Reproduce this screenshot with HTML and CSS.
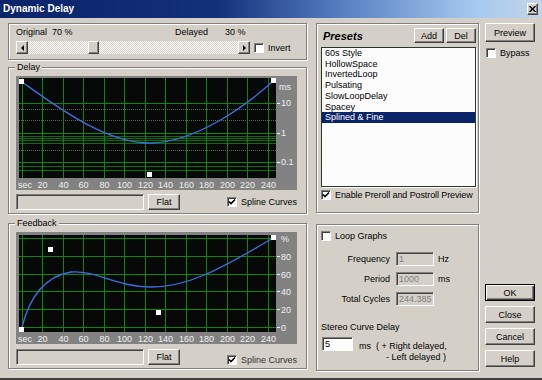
FILE: index.html
```html
<!DOCTYPE html>
<html lang="en">
<head>
    <meta charset="UTF-8">
    <title>Dynamic Delay</title>
    <link rel="stylesheet" href="styles.css">
</head>
<body>
<div class="window">
    <div class="titlebar">
        <span class="title">Dynamic Delay</span>
        <button class="title-close">
            <svg width="7" height="6" viewBox="0 0 7 6"><path d="M0.5 0 L6.5 6 M6.5 0 L0.5 6" stroke="#000" stroke-width="1.4"/></svg>
        </button>
    </div>

    <div class="client">
        <!-- Left column: mix slider and graphs -->
        <div class="col-left">
            <div class="group mix">
                <div class="mix-labels">
                    <span class="mix-name">Original</span><span class="mix-pct">70 %</span>
                    <span class="mix-name delayed">Delayed</span><span>30 %</span>
                </div>
                <div class="mix-row">
                    <div class="scroll">
                        <span class="scroll-btn"><svg width="3" height="6" viewBox="0 0 3 6"><path d="M3 0 L0 3 L3 6Z" fill="#000"/></svg></span>
                        <span class="scroll-track"><span class="scroll-thumb"></span></span>
                        <span class="scroll-btn"><svg width="3" height="6" viewBox="0 0 3 6"><path d="M0 0 L3 3 L0 6Z" fill="#000"/></svg></span>
                    </div>
                    <label class="checkbox invert"><span class="check"></span>Invert</label>
                </div>
            </div>

            <div class="group graph-group delay">
                <span class="legend">Delay</span>
                <svg class="graph" width="281" height="114" viewBox="0 0 281 114">
                    <rect width="281" height="114" fill="#828282"/>
                    <rect x="3" y="2" width="257" height="100" fill="#060907"/>
                    <path stroke="#0b6e0b" d="M3 60.5h257M3 62.5h257M3 64.5h257M3 67.5h257M3 90.5h257M3 94.5h257"/>
                    <path stroke="#4f6a4f" stroke-dasharray="1 1" d="M3 33.5h257M3 44.5h257M3 74.5h257"/>
                    <path stroke="#0d860d" d="M6.5 2v100M26.5 2v100M47.5 2v100M67.5 2v100M88.5 2v100M108.5 2v100M129.5 2v100M149.5 2v100M170.5 2v100M190.5 2v100M211.5 2v100M231.5 2v100M252.5 2v100M3 27.5h257M3 57.5h257M3 86.5h257"/>
                    <path d="M6 6C40 30 90 68 135 67S230 30 257 5" fill="none" stroke="#3c6fe2" stroke-width="1.3"/>
                    <rect x="3" y="3" width="5" height="5" fill="#fff"/>
                    <rect x="255" y="2" width="5" height="5" fill="#fff"/>
                    <rect x="131" y="96" width="5" height="5" fill="#fff"/>
                    <path stroke="#eee" d="M261 27.5h3M261 57.5h3M261 86.5h3"/>
                    <text x="263" y="14">ms</text>
                    <text x="265" y="30">10</text>
                    <text x="265" y="60">1</text>
                    <text x="265" y="89">0.1</text>
                    <g text-anchor="middle">
                        <text x="26.5" y="112">20</text>
                        <text x="47.5" y="112">40</text>
                        <text x="67.5" y="112">60</text>
                        <text x="88.5" y="112">80</text>
                        <text x="108.5" y="112">100</text>
                        <text x="129.5" y="112">120</text>
                        <text x="149.5" y="112">140</text>
                        <text x="170.5" y="112">160</text>
                        <text x="190.5" y="112">180</text>
                        <text x="211.5" y="112">200</text>
                        <text x="231.5" y="112">220</text>
                        <text x="252.5" y="112">240</text>
                    </g>
                    <text x="2" y="112">sec</text>
                </svg>
                <div class="graph-row">
                    <span class="field"></span>
                    <button class="btn flat">Flat</button>
                    <label class="checkbox spline"><span class="check"><svg width="8" height="8" viewBox="0 0 8 8"><path d="M1 3.5 L3 5.5 L7 1.5" fill="none" stroke="#000" stroke-width="1.6"/></svg></span>Spline Curves</label>
                </div>
            </div>

            <div class="group graph-group feedback">
                <span class="legend">Feedback</span>
                <svg class="graph" width="281" height="112" viewBox="0 0 281 112">
                    <rect width="281" height="112" fill="#828282"/>
                    <rect x="3" y="3" width="257" height="97" fill="#060907"/>
                    <path stroke="#0d860d" d="M6.5 3v97M26.5 3v97M47.5 3v97M67.5 3v97M88.5 3v97M108.5 3v97M129.5 3v97M149.5 3v97M170.5 3v97M190.5 3v97M211.5 3v97M231.5 3v97M252.5 3v97M3 6.5h257M3 24.5h257M3 42.5h257M3 59.5h257M3 77.5h257M3 95.5h257"/>
                    <path d="M5.5 97C12 70 25 45 55 40C80 38 100 55 135 55C170 55 200 40 257 6" fill="none" stroke="#3c6fe2" stroke-width="1.3"/>
                    <rect x="3" y="95" width="5" height="5" fill="#fff"/>
                    <rect x="32" y="15" width="5" height="5" fill="#fff"/>
                    <rect x="140" y="78" width="5" height="5" fill="#fff"/>
                    <rect x="255" y="3" width="5" height="5" fill="#fff"/>
                    <path stroke="#eee" d="M261 24.5h3M261 42.5h3M261 59.5h3M261 77.5h3M261 95.5h3"/>
                    <text x="265" y="10">%</text>
                    <text x="265" y="28">80</text>
                    <text x="265" y="46">60</text>
                    <text x="265" y="63">40</text>
                    <text x="265" y="81">20</text>
                    <text x="265" y="99">0</text>
                    <g text-anchor="middle">
                        <text x="26.5" y="110">20</text>
                        <text x="47.5" y="110">40</text>
                        <text x="67.5" y="110">60</text>
                        <text x="88.5" y="110">80</text>
                        <text x="108.5" y="110">100</text>
                        <text x="129.5" y="110">120</text>
                        <text x="149.5" y="110">140</text>
                        <text x="170.5" y="110">160</text>
                        <text x="190.5" y="110">180</text>
                        <text x="211.5" y="110">200</text>
                        <text x="231.5" y="110">220</text>
                        <text x="252.5" y="110">240</text>
                    </g>
                    <text x="2" y="110">sec</text>
                </svg>
                <div class="graph-row">
                    <span class="field"></span>
                    <button class="btn flat">Flat</button>
                    <label class="checkbox spline"><span class="check"><svg width="8" height="8" viewBox="0 0 8 8"><path d="M1 3.5 L3 5.5 L7 1.5" fill="none" stroke="#000" stroke-width="1.6"/></svg></span>Spline Curves</label>
                </div>
            </div>
        </div>

        <!-- Middle column: presets and loop options -->
        <div class="col-mid">
            <div class="group presets">
                <div class="presets-head">
                    <span class="presets-title">Presets</span>
                    <button class="btn small">Add</button>
                    <button class="btn small">Del</button>
                </div>
                <ul class="listbox">
                    <li>60s Style</li>
                    <li>HollowSpace</li>
                    <li>InvertedLoop</li>
                    <li>Pulsating</li>
                    <li>SlowLoopDelay</li>
                    <li>Spacey</li>
                    <li class="selected">Splined &amp; Fine</li>
                </ul>
                <label class="checkbox preroll"><span class="check"><svg width="8" height="8" viewBox="0 0 8 8"><path d="M1 3.5 L3 5.5 L7 1.5" fill="none" stroke="#000" stroke-width="1.6"/></svg></span>Enable Preroll and Postroll Preview</label>
            </div>

            <div class="group loop">
                <label class="checkbox"><span class="check"></span>Loop Graphs</label>
                <div class="loop-fields">
                    <div class="loop-row"><span class="loop-label">Frequency</span><span class="input disabled">1</span><span class="unit">Hz</span></div>
                    <div class="loop-row"><span class="loop-label">Period</span><span class="input disabled">1000</span><span class="unit">ms</span></div>
                    <div class="loop-row"><span class="loop-label">Total Cycles</span><span class="input disabled">244.385</span></div>
                </div>
                <div class="stereo-title">Stereo Curve Delay</div>
                <div class="stereo-row">
                    <span class="input stereo-input">5</span>
                    <div class="stereo-note">
                        <span>ms &nbsp;( + Right delayed,</span>
                        <span class="indent">- Left delayed )</span>
                    </div>
                </div>
            </div>
        </div>

        <!-- Right column: dialog buttons -->
        <div class="col-right">
            <button class="btn preview">Preview</button>
            <label class="checkbox bypass"><span class="check"></span>Bypass</label>
            <div class="dialog-buttons">
                <button class="btn default">OK</button>
                <button class="btn">Close</button>
                <button class="btn">Cancel</button>
                <button class="btn">Help</button>
            </div>
        </div>
    </div>
</div>
</body>
</html>
```

FILE: styles.css
```css
* {
    margin: 0;
    padding: 0;
    box-sizing: border-box;
    font-family: 'Liberation Sans', Arial, sans-serif;
}

body {
    background: #d4d0c8;
}

.window {
    width: 542px;
    height: 380px;
    background: #d4d0c8;
    border-bottom: 2px solid #404040;
    display: flex;
    flex-direction: column;
    font-size: 9px;
    line-height: 10px;
    color: #000;
}

/* Title bar */
.titlebar {
    height: 18px;
    display: flex;
    align-items: center;
    justify-content: space-between;
    padding: 0 4px 0 3px;
    background: linear-gradient(to right, #0a246a 0%, #12307a 40%, #5a82c4 64%, #a6caf0 88%, #c4d4e8 100%);
}

.title {
    color: #fff;
    font-weight: bold;
    font-size: 10px;
}

.title-close {
    width: 11px;
    height: 12px;
    display: flex;
    align-items: center;
    justify-content: center;
    background: #d4d0c8;
    border: 1px solid;
    border-color: #fff #404040 #404040 #fff;
    box-shadow: inset -1px -1px 0 #808080;
}

/* Layout */
.client {
    display: flex;
    padding: 5px 0 0 8px;
}

.col-left {
    width: 299px;
    display: flex;
    flex-direction: column;
}

.col-mid {
    width: 163px;
    margin-left: 9px;
    display: flex;
    flex-direction: column;
}

.col-right {
    width: 50px;
    margin-left: 6px;
    display: flex;
    flex-direction: column;
}

/* Etched group box */
.group {
    position: relative;
    border: 1px solid #808080;
    box-shadow: 1px 1px 0 #fff, inset 1px 1px 0 #fff;
}

.legend {
    position: absolute;
    top: -6px;
    left: 6px;
    padding: 0 2px;
    background: #d4d0c8;
}

/* Mix slider */
.mix {
    padding: 3px 0 5px 7px;
}

.mix-labels {
    display: flex;
    height: 10px;
}

.mix-name {
    width: 36px;
}

.mix-name.delayed {
    width: 50px;
}

.mix-pct {
    width: 123px;
}

.mix-row {
    display: flex;
    align-items: center;
    margin-top: 4px;
}

.scroll {
    display: flex;
    height: 13px;
}

.scroll-btn {
    width: 12px;
    height: 13px;
    display: flex;
    align-items: center;
    justify-content: center;
    background: #d4d0c8;
    border: 1px solid;
    border-color: #fff #404040 #404040 #fff;
    box-shadow: inset -1px -1px 0 #808080;
}

.scroll-track {
    width: 210px;
    display: flex;
    background-color: #fff;
    background-image: repeating-conic-gradient(#d4d0c8 0 25%, #fff 0 50%);
    background-size: 2px 2px;
}

.scroll-thumb {
    width: 11px;
    margin-left: 60px;
    background: #d4d0c8;
    border: 1px solid;
    border-color: #fff #404040 #404040 #fff;
    box-shadow: inset -1px -1px 0 #808080;
}

/* Checkbox */
.checkbox {
    display: flex;
    align-items: center;
    gap: 4px;
    height: 10px;
    white-space: nowrap;
}

.check {
    flex: none;
    width: 10px;
    height: 10px;
    display: flex;
    align-items: center;
    justify-content: center;
    background: #fff;
    border: 1px solid;
    border-color: #808080 #fff #fff #808080;
    box-shadow: inset 1px 1px 0 #404040;
}

.invert {
    margin-left: 4px;
}

/* Graph groups */
.graph-group {
    padding: 8px 9px 3px 7px;
}

.delay {
    margin-top: 7px;
}

.feedback {
    margin-top: 9px;
}

.graph {
    display: block;
}

.graph text {
    font-size: 9px;
    fill: #f0f0f0;
}

.graph-row {
    display: flex;
    align-items: center;
    margin-top: 4px;
    height: 16px;
}

.feedback .graph-row {
    margin-top: 5px;
}

.field {
    width: 128px;
    height: 16px;
    border: 1px solid;
    border-color: #808080 #fff #fff #808080;
    box-shadow: inset 1px 1px 0 #404040;
}

.btn {
    font-size: 9px;
    color: #000;
    background: #d4d0c8;
    border: 1px solid;
    border-color: #fff #404040 #404040 #fff;
    box-shadow: inset -1px -1px 0 #808080;
    display: flex;
    align-items: center;
    justify-content: center;
}

.btn.flat {
    width: 32px;
    height: 16px;
    margin-left: 4px;
}

.spline {
    margin-left: 47px;
}

.feedback .spline {
    margin-top: 6px;
    color: #333;
}

/* Presets */
.presets {
    padding: 4px 2px 12px 4px;
}

.presets-head {
    display: flex;
    align-items: center;
    height: 15px;
}

.presets-title {
    font-size: 11px;
    font-weight: bold;
    font-style: italic;
    margin-left: 2px;
    margin-right: auto;
}

.btn.small {
    width: 30px;
    height: 15px;
    margin-left: 2px;
}

.listbox {
    list-style: none;
    height: 140px;
    margin: 4px 0 3px;
    background: #fcfcfc;
    border: 1px solid #28382a;
    box-shadow: 1px 1px 0 #fff;
}

.listbox li {
    line-height: 10.7px;
    padding-left: 3px;
}

.listbox li.selected {
    background: #0a246a;
    color: #fff;
}

.preroll {
    letter-spacing: -0.1px;
}

/* Loop options */
.loop {
    margin-top: 11px;
    padding: 6px 2px 0 4px;
    height: 147px;
}

.loop-fields {
    display: flex;
    flex-direction: column;
    gap: 6px;
    margin-top: 11px;
}

.loop-row {
    display: flex;
    align-items: center;
}

.loop-label {
    width: 69px;
    text-align: right;
}

.input {
    height: 14px;
    line-height: 12px;
    padding-left: 2px;
    border: 1px solid;
    border-color: #808080 #fff #fff #808080;
    box-shadow: inset 1px 1px 0 #404040;
    background: #fff;
}

.input.disabled {
    width: 38px;
    margin-left: 6px;
    background: #d4d0c8;
    color: #808080;
}

.unit {
    margin-left: 4px;
}

.stereo-title {
    margin-top: 16px;
}

.stereo-row {
    display: flex;
    align-items: flex-start;
    margin-top: 5px;
    margin-left: 1px;
}

.stereo-input {
    width: 31px;
}

.stereo-note {
    display: flex;
    flex-direction: column;
    margin-left: 6px;
    padding-top: 4px;
    line-height: 11px;
}

.stereo-note .indent {
    padding-left: 27px;
}

/* Right column */
.btn.preview {
    height: 19px;
}

.bypass {
    margin-top: 6px;
    margin-left: 1px;
}

.dialog-buttons {
    display: flex;
    flex-direction: column;
    gap: 5px;
    margin-top: 226px;
}

.dialog-buttons .btn {
    height: 17px;
}

.btn.default {
    border-color: #000;
    box-shadow: inset 1px 1px 0 #fff, inset -1px -1px 0 #404040, inset -2px -2px 0 #808080;
}
```
